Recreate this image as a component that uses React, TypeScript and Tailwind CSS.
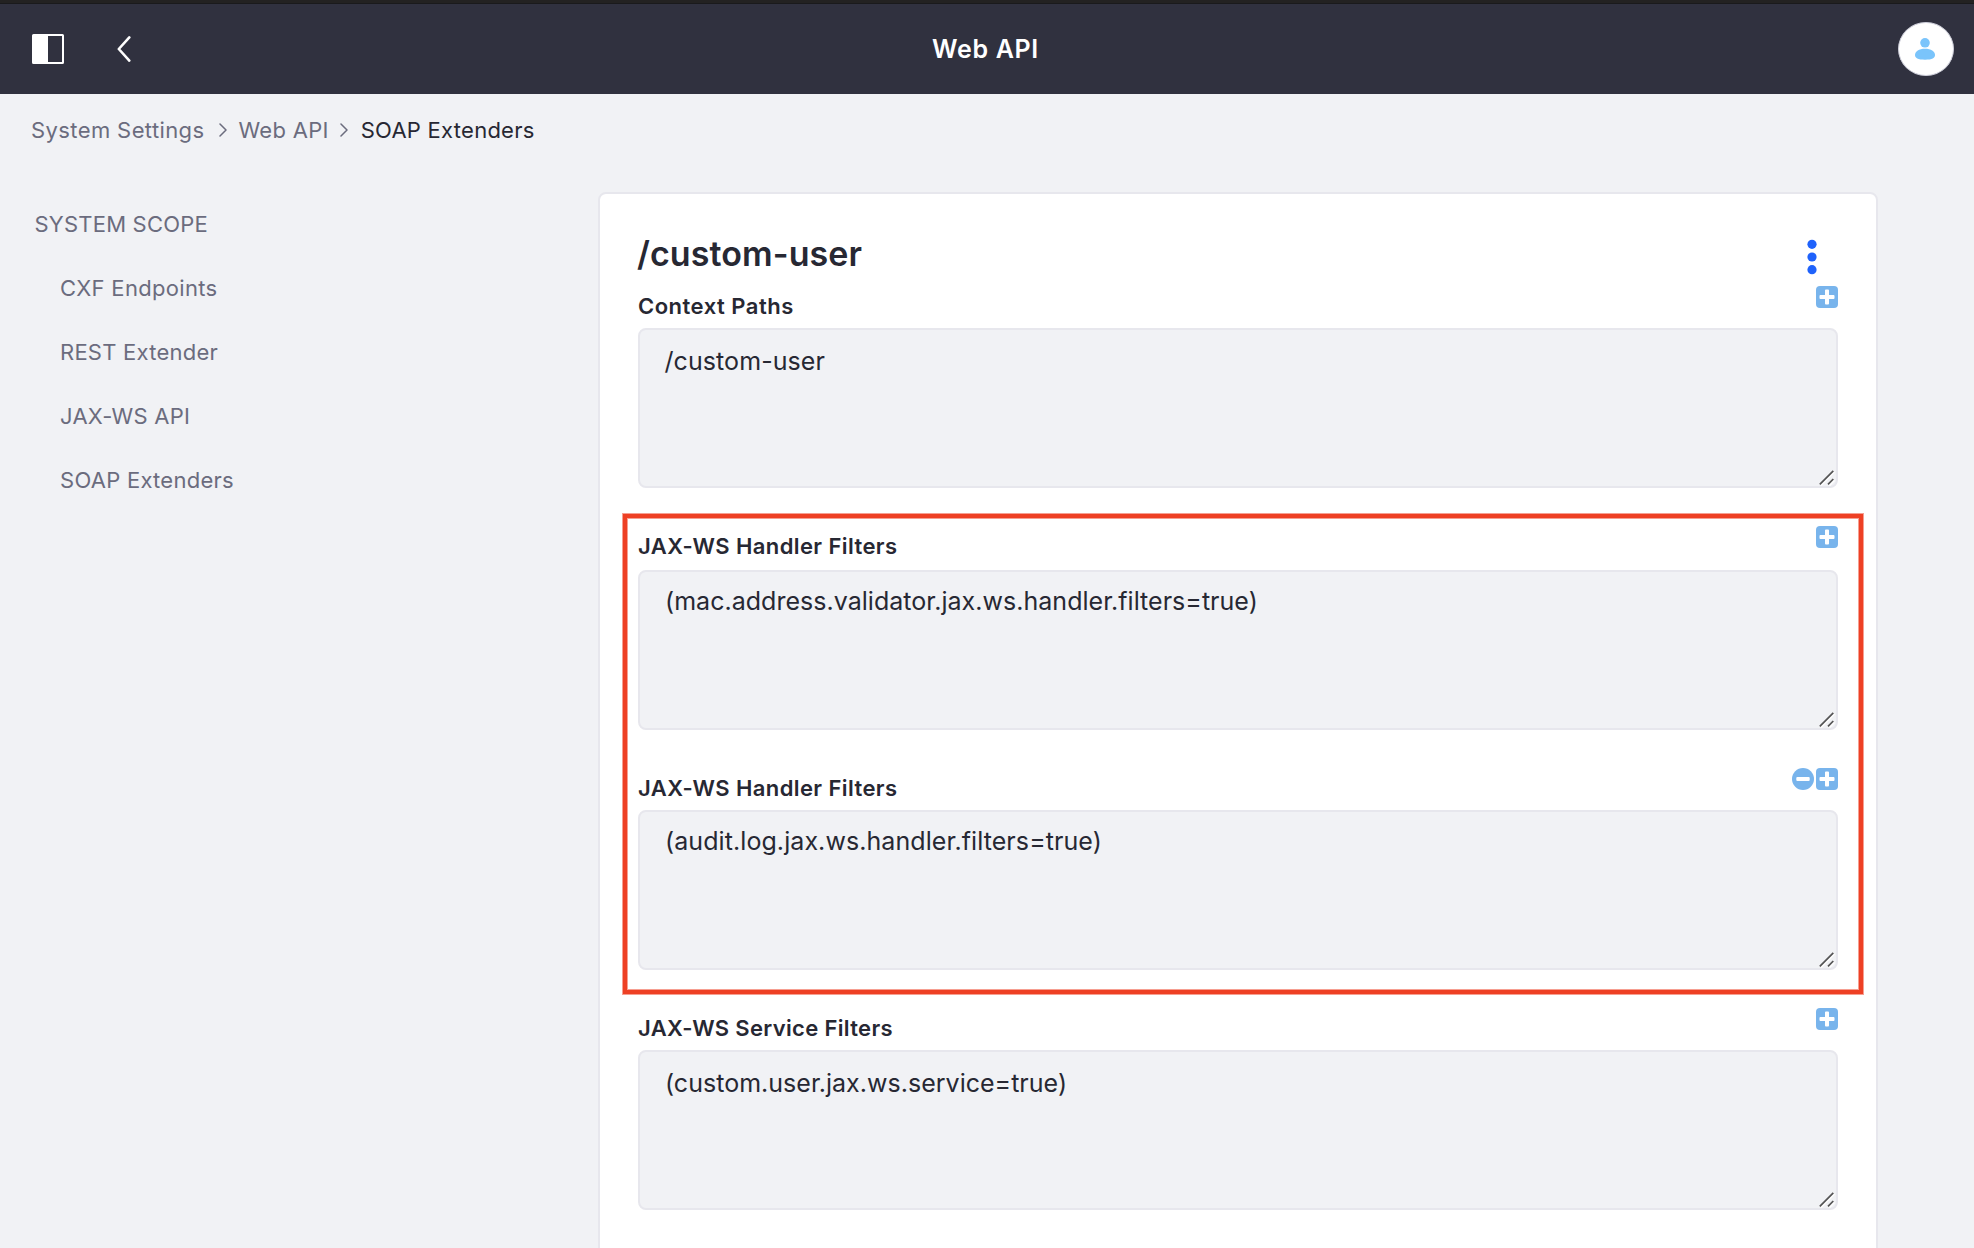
import type { ReactNode } from 'react';

function PanelIcon() {
  return (
    <svg className="h-[30px] w-8" viewBox="0 0 32 30" fill="none">
      <rect x="1" y="1" width="30" height="28" rx="0.5" stroke="#fff" strokeWidth="2" />
      <rect x="1" y="1" width="15" height="28" fill="#fff" />
    </svg>
  );
}

function BackIcon() {
  return (
    <svg className="h-[26px] w-[14px]" viewBox="0 0 14 26" fill="none">
      <path d="M12.3 1.4 1.8 13l10.5 11.6" stroke="#fff" strokeWidth="2.6" strokeLinecap="round" strokeLinejoin="round" />
    </svg>
  );
}

function UserAvatar() {
  return (
    <div className="flex h-[54px] w-14 items-center justify-center rounded-[50%] border border-[#cdced9] bg-white">
      <svg className="mr-[2px] h-[22px] w-5" viewBox="0 0 20 22" fill="#7ac4fb">
        <circle cx="10" cy="4.8" r="4.8" />
        <path d="M10 10.8c6 0 10 2.6 10 6.2 0 3-2.7 4.7-10 4.7S0 20 0 17c0-3.6 4-6.2 10-6.2z" />
      </svg>
    </div>
  );
}

function Separator() {
  return (
    <svg className="h-[14px] w-2 shrink-0" viewBox="0 0 8 14" fill="none">
      <path d="m1 1 6 6-6 6" stroke="#6b6c7e" strokeWidth="1.5" strokeLinecap="round" strokeLinejoin="round" />
    </svg>
  );
}

function PlusIcon() {
  return (
    <svg className="size-[22px]" viewBox="0 0 22 22">
      <rect width="22" height="22" rx="4" fill="#78b4ec" />
      <path d="M3.5 9.9q0-.9.9-.9H9V4.400q0-.9.9-.9h2.200q.9 0 .9.9V9h4.600q.9 0 .9.9v2.200q0 .9-.9.9H13v4.600q0 .9-.9.9H9.900q-.9 0-.9-.9V13H4.400q-.9 0-.9-.9z" fill="#fff" />
    </svg>
  );
}

function MinusIcon() {
  return (
    <svg className="size-[22px]" viewBox="0 0 22 22">
      <circle cx="11" cy="11" r="11" fill="#78b4ec" />
      <rect x="4.3" y="9" width="13.4" height="4" rx="1" fill="#fff" />
    </svg>
  );
}

function ResizeGrip() {
  return (
    <svg className="absolute right-px bottom-0 h-4 w-4" viewBox="0 0 16 16" fill="none">
      <path d="M2 15.5 15.5 2M10.5 15.5l5-5" stroke="#fff" strokeWidth="1.5" />
      <path d="M.8 14.3 14.3.8M9 14.3l5.300-5.300" stroke="#555" strokeWidth="1.7" />
    </svg>
  );
}

interface FieldProps {
  label: ReactNode;
  labelClass: string;
  value: string;
  valueClass: string;
  boxClass: string;
  removable?: boolean;
}

function Field({ label, labelClass, value, valueClass, boxClass, removable }: FieldProps) {
  return (
    <div>
      <div className="flex h-8 items-start justify-between">
        <label className={`text-[22px] leading-8 font-semibold ${labelClass}`}>{label}</label>
        <div className="-mt-1 flex gap-[2px]">
          {removable && <MinusIcon />}
          <PlusIcon />
        </div>
      </div>
      <div className={`relative h-40 rounded-lg border-2 border-[#e7e7ed] bg-[#f1f2f5] text-[25px] leading-8 ${boxClass}`}>
        <p className={valueClass}>{value}</p>
        <ResizeGrip />
      </div>
    </div>
  );
}

export default function App() {
  return (
    <div className="h-[1248px] w-[1974px] overflow-hidden bg-[#f1f2f5] font-['Inter',sans-serif] text-[#272833]">
      <div className="h-1 border-b border-[#1a1a1c] bg-[#232222]" />
      <header className="grid h-[90px] grid-cols-[1fr_auto_1fr] items-center bg-[#30313f] pr-5 pl-8 text-white">
        <div className="flex items-center gap-[53px]">
          <PanelIcon />
          <BackIcon />
        </div>
        <h1 className="mr-[15px] text-[25px] leading-8 font-semibold tracking-[0.66px]">Web API</h1>
        <div className="flex justify-end">
          <UserAvatar />
        </div>
      </header>

      <nav className="flex items-center pt-5 pl-[31px] text-[22px] leading-8 text-[#6b6c7e]">
        <span className="tracking-[0.395px]">System Settings</span>
        <span className="mr-3 ml-[14px]"><Separator /></span>
        <span className="tracking-[0.288px]">Web API</span>
        <span className="mr-[13px] ml-[11px]"><Separator /></span>
        <span className="tracking-[0.26px] text-[#272833]">SOAP Extenders</span>
      </nav>

      <div className="mt-[46px] flex">
        <aside className="w-[598px] shrink-0 pt-4 pl-[34.5px] text-[22px] leading-8 text-[#6b6c7e]">
          <h2 className="tracking-[0.21px]">SYSTEM SCOPE</h2>
          <ul className="mt-8 flex flex-col gap-8 pl-[25.5px]">
            <li className="tracking-[0.31px]">CXF Endpoints</li>
            <li className="tracking-[0.24px]">REST Extender</li>
            <li className="tracking-[0.25px]">JAX-WS API</li>
            <li className="tracking-[0.26px]">SOAP Extenders</li>
          </ul>
        </aside>

        <main className="h-[1100px] w-[1280px] shrink-0 rounded-lg border-2 border-[#e7e7ed] bg-white px-[38px] pt-10">
          <div className="flex h-10 justify-between">
            <h2 className="-ml-px text-[34px] leading-10 font-semibold tracking-[0.08px]">/custom-user</h2>
            <svg className="mt-[5px] mr-[21px] h-9 w-[10px]" viewBox="0 0 10 36" fill="#1f62fb">
              <circle cx="5" cy="5.3" r="4.6" />
              <circle cx="5" cy="18" r="4.6" />
              <circle cx="5" cy="30.7" r="4.6" />
            </svg>
          </div>

          <div className="mt-4 flex flex-col gap-[42px]">
            <Field
              label="Context Paths"
              labelClass="tracking-[0.5px]"
              value="/custom-user"
              valueClass="tracking-[0.08px]"
              boxClass="mt-[6px] pt-[15px] pl-[24.5px]"
            />
            <div className="relative flex flex-col gap-[42px]">
              <Field
                label="JAX-WS Handler Filters"
                labelClass="tracking-[0.41px]"
                value="(mac.address.validator.jax.ws.handler.filters=true)"
                valueClass="tracking-[0.03px]"
                boxClass="mt-2 pt-[13px] pl-[25px]"
              />
              <Field
                label="JAX-WS Handler Filters"
                labelClass="tracking-[0.41px]"
                value="(audit.log.jax.ws.handler.filters=true)"
                valueClass="tracking-[0.08px]"
                boxClass="mt-[6px] pt-[13px] pl-[25px]"
                removable
              />
              <div className="pointer-events-none absolute -top-4 -right-[25px] -bottom-6 -left-[15px] border-4 border-[#ee4024] shadow-[0_0_0_1px_#ee402480,inset_0_0_0_1px_#ee402480]" />
            </div>
            <Field
              label="JAX-WS Service Filters"
              labelClass="tracking-[0.33px]"
              value="(custom.user.jax.ws.service=true)"
              valueClass="tracking-[0.02px]"
              boxClass="mt-[6px] pt-[15px] pl-[25px]"
            />
          </div>
        </main>
      </div>
    </div>
  );
}
